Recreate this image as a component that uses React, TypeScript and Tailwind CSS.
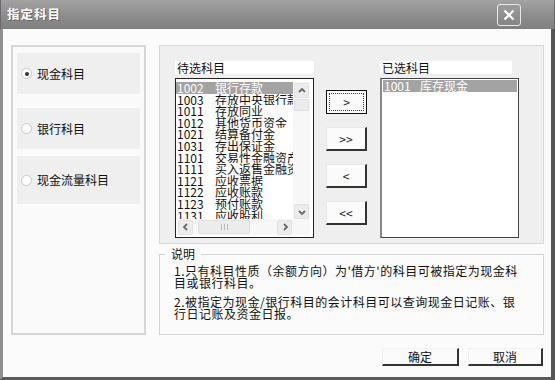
import React from "react";

const F = { fontFamily: '"Noto Sans CJK SC", "Liberation Sans", sans-serif' };

const leftItems: [string, string][] = [
  ["1002", "银行存款"],
  ["1003", "存放中央银行款项"],
  ["1011", "存放同业"],
  ["1012", "其他货币资金"],
  ["1021", "结算备付金"],
  ["1031", "存出保证金"],
  ["1101", "交易性金融资产"],
  ["1111", "买入返售金融资产"],
  ["1121", "应收票据"],
  ["1122", "应收账款"],
  ["1123", "预付账款"],
  ["1131", "应收股利"],
];

function Chevron({ dir }: { dir: "up" | "down" | "left" | "right" }) {
  const d =
    dir === "up"
      ? "M2 6 L5 3 L8 6"
      : dir === "down"
      ? "M2 4 L5 7 L8 4"
      : dir === "left"
      ? "M6 2 L3 5 L6 8"
      : "M4 2 L7 5 L4 8";
  return (
    <svg width="10" height="10" viewBox="0 0 10 10">
      <path d={d} fill="none" stroke="#6b6b6b" strokeWidth="1.8" />
    </svg>
  );
}

function SBtn({ dir }: { dir: "up" | "down" | "left" | "right" }) {
  return (
    <div className="w-[15px] h-[15px] flex items-center justify-center rounded-[2px] border border-[#e2e2e2] bg-[#ececec]">
      <Chevron dir={dir} />
    </div>
  );
}

function Radio({ checked }: { checked?: boolean }) {
  return (
    <div className="w-[11px] h-[11px] rounded-full border border-[#c8c8c8] bg-white flex items-center justify-center">
      {checked && <div className="w-[4px] h-[4px] rounded-full bg-[#333]" />}
    </div>
  );
}

function MoveBtn({ label, focused }: { label: string; focused?: boolean }) {
  if (focused) {
    return (
      <div className="w-[41px] h-[24px] border border-[#111] bg-[#fbfbfb] p-[2px]">
        <div className="w-full h-full border border-dotted border-[#444] flex items-center justify-center text-[12px] text-[#222]">
          {label}
        </div>
      </div>
    );
  }
  return (
    <div className="w-[41px] h-[24px] border-t border-l border-t-[#e8e8e8] border-l-[#e8e8e8] border-r-2 border-b-2 border-r-[#333] border-b-[#333] bg-[#fbfbfb] flex items-center justify-center text-[12px] text-[#222]">
      {label}
    </div>
  );
}

export default function App() {
  return (
    <div className="w-[555px] h-[380px] flex flex-col select-none" style={F}>
      {/* Title bar */}
      <div className="h-[29px] flex items-center justify-between pl-[6px] pr-[33px] bg-gradient-to-b from-[#a2a2a2] via-[#8e8e8e] to-[#808080] border-l border-r border-[#6a6a6a]">
        <span className="text-white text-[12.5px] font-bold tracking-[1px] [text-shadow:1px_1px_0_#666]">
          指定科目
        </span>
        <div className="w-[24px] h-[22px] rounded-[3px] border border-[#e8e8e8] bg-gradient-to-b from-[#9c9c9c] to-[#858585] flex items-center justify-center">
          <svg width="12" height="12" viewBox="0 0 12 12">
            <path d="M1.5 1.5 L10.5 10.5 M10.5 1.5 L1.5 10.5" stroke="white" strokeWidth="2.2" />
          </svg>
        </div>
      </div>

      {/* Body */}
      <div className="flex-1 flex flex-col bg-[#fbfbfb] border-l-[3px] border-r-[4px] border-b-[3px] border-l-[#8f8f8f] border-r-[#555] border-b-[#5a5a5a] pl-[8px] pt-[16px]">
        <div className="flex gap-[13px]">
          {/* Left panel */}
          <div className="w-[135px] h-[290px] border-2 border-[#d6d6d6] bg-[#fafafa] px-[4px] pt-[6px] flex flex-col">
            <div className="h-[41px] bg-[#efefef] flex items-center pl-[4px] gap-[5px] text-[12px] text-[#111]">
              <Radio checked />
              <span>现金科目</span>
            </div>
            <div className="h-[41px] mt-[14px] bg-[#efefef] flex items-center pl-[4px] gap-[5px] text-[12px] text-[#111]">
              <Radio />
              <span>银行科目</span>
            </div>
            <div className="h-[48px] mt-[7px] bg-[#efefef] flex items-center pl-[4px] gap-[5px] text-[12px] text-[#111]">
              <Radio />
              <span>现金流量科目</span>
            </div>
          </div>

          {/* Right column */}
          <div className="w-[385px] flex flex-col">
            <div className="h-[199px] border border-[#d8d8d8] bg-[#efefef] pl-[15px] pt-[15px] flex">
              {/* Pending list */}
              <div className="w-[139px] flex flex-col">
                <div className="h-[13px] bg-white text-[12px] leading-[13px] text-[#111] pl-[2px]">待选科目</div>
                <div className="mt-[4px] h-[160px] border border-[#222] bg-white relative overflow-hidden">
                  <div className="pt-[3px]">
                    {leftItems.map(([c, n], i) => (
                      <div
                        key={c}
                        className={`h-[11.6px] flex items-center text-[12px] leading-[11.6px] whitespace-nowrap overflow-hidden w-[118px] ${
                          i === 0 ? "bg-[#a3a3a3] text-white" : "text-[#111]"
                        }`}
                      >
                        <span className="w-[39px] pl-[1px] shrink-0">{c}</span>
                        <span>{n}</span>
                      </div>
                    ))}
                  </div>
                  {/* vertical scrollbar */}
                  <div className="absolute right-[3px] top-[3px] w-[17px] h-[137px] bg-[#f7f7f7] flex flex-col items-center pt-[1px]">
                    <SBtn dir="up" />
                    <div className="w-[15px] h-[12px] mt-[1px] rounded-[2px] border border-[#e0e0e0] bg-[#ececec]" />
                    <div className="flex-1" />
                    <SBtn dir="down" />
                  </div>
                  {/* horizontal scrollbar */}
                  <div className="absolute left-[1px] bottom-[2px] w-[116px] h-[16px] bg-[#f7f7f7] flex items-center px-[1px]">
                    <SBtn dir="left" />
                    <div className="w-[52px] h-[14px] ml-[5px] rounded-[2px] border border-[#e0e0e0] bg-[#ececec] flex items-center justify-center">
                      <div className="flex gap-[2px]">
                        <div className="w-[1px] h-[6px] bg-[#bbb]" />
                        <div className="w-[1px] h-[6px] bg-[#bbb]" />
                        <div className="w-[1px] h-[6px] bg-[#bbb]" />
                      </div>
                    </div>
                    <div className="flex-1" />
                    <SBtn dir="right" />
                  </div>
                  <div className="absolute right-[3px] bottom-[2px] w-[17px] h-[16px] bg-[#f7f7f7]" />
                </div>
              </div>

              {/* Move buttons */}
              <div className="ml-[12px] pt-[29px] flex flex-col gap-[13px]">
                <MoveBtn label=">" focused />
                <MoveBtn label=">>" />
                <MoveBtn label="<" />
                <MoveBtn label="<<" />
              </div>

              {/* Selected list */}
              <div className="ml-[13px] w-[139px] flex flex-col">
                <div className="h-[13px] w-[132px] bg-white text-[12px] leading-[13px] text-[#111] pl-[2px]">已选科目</div>
                <div className="mt-[4px] h-[160px] border border-[#444] border-l-2 border-l-[#888] bg-white pt-[1px] px-[1px]">
                  <div className="h-[12px] bg-[#a3a3a3] text-white text-[12px] leading-[12px] flex items-center">
                    <span className="w-[37px] pl-[1px]">1001</span>
                    <span>库存现金</span>
                  </div>
                </div>
              </div>
            </div>

            {/* Description groupbox */}
            <div className="mt-[10px] relative h-[81px] border border-[#d4d4d4] border-t-0">
              <div className="absolute -top-[7px] left-0 right-0 flex items-center">
                <div className="w-[5px] h-px bg-[#d4d4d4]" />
                <span className="px-[6px] text-[12px] leading-[14px] text-[#111]">说明</span>
                <div className="flex-1 h-px bg-[#d4d4d4]" />
              </div>
              <div className="pt-[11px] pl-[14px] text-[12px] leading-[12px] tracking-[0.5px] text-[#111] whitespace-nowrap">
                <p>
                  1.只有科目性质（余额方向）为'借方'的科目可被指定为现金科
                  <br />
                  目或银行科目。
                </p>
                <p className="mt-[7px]">
                  2.被指定为现金/银行科目的会计科目可以查询现金日记账、银
                  <br />
                  行日记账及资金日报。
                </p>
              </div>
            </div>

            {/* Bottom buttons */}
            <div className="mt-[13px] flex justify-end gap-[9px] pr-[1px]">
              <div className="w-[77px] h-[18px] border-t border-l border-[#f0f0f0] border-r-2 border-b-2 border-r-[#333] border-b-[#333] flex items-center justify-center text-[12px] text-[#111]">
                确定
              </div>
              <div className="w-[75px] h-[18px] border-t border-l border-[#f0f0f0] border-r-2 border-b-2 border-r-[#333] border-b-[#333] flex items-center justify-center text-[12px] text-[#111]">
                取消
              </div>
            </div>
          </div>
        </div>
      </div>
    </div>
  );
}
